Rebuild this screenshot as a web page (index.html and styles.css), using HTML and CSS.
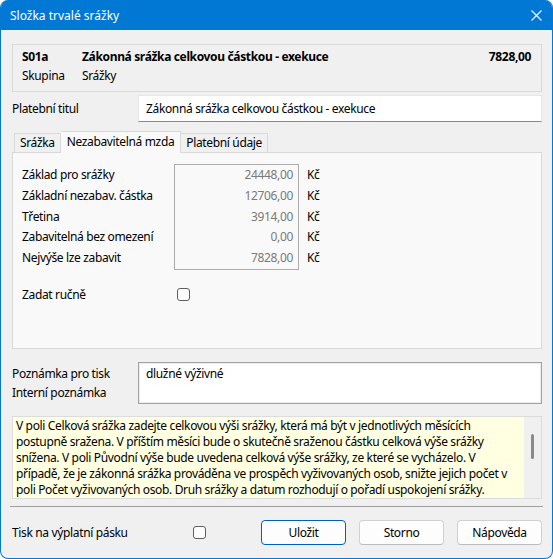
FILE: index.html
```html
<!DOCTYPE html>
<html lang="cs">
<head>
<meta charset="utf-8">
<title>Složka trvalé srážky</title>
<link rel="stylesheet" href="styles.css">
</head>
<body>
<div class="window">
  <div class="titlebar">
    <span class="title">Složka trvalé srážky</span>
    <svg class="close" width="11" height="11" viewBox="0 0 11 11"><path d="M0.5 0.5 L10.5 10.5 M10.5 0.5 L0.5 10.5" stroke="#fff" stroke-width="1.1" fill="none"/></svg>
  </div>
  <div class="content">
    <div class="header">
      <span class="b">S01a</span>
      <span class="b">Zákonná srážka celkovou částkou - exekuce</span>
      <span class="b amount">7828,00</span>
      <span>Skupina</span>
      <span>Srážky</span>
      <span></span>
    </div>

    <div class="field-row">
      <span class="label">Platební titul</span>
      <div class="input">Zákonná srážka celkovou částkou - exekuce</div>
    </div>

    <div class="tabs">
      <div class="tab">Srážka</div>
      <div class="tab active">Nezabavitelná mzda</div>
      <div class="tab">Platební údaje</div>
    </div>
    <div class="panel">
      <div class="calc">
        <div class="calc-labels">
          <div class="row">Základ pro srážky</div>
          <div class="row">Základní nezabav. částka</div>
          <div class="row">Třetina</div>
          <div class="row">Zabavitelná bez omezení</div>
          <div class="row">Nejvýše lze zabavit</div>
        </div>
        <div class="calc-values">
          <div class="row">24448,00</div>
          <div class="row">12706,00</div>
          <div class="row">3914,00</div>
          <div class="row">0,00</div>
          <div class="row">7828,00</div>
        </div>
        <div class="calc-units">
          <div class="row">Kč</div>
          <div class="row">Kč</div>
          <div class="row">Kč</div>
          <div class="row">Kč</div>
          <div class="row">Kč</div>
        </div>
      </div>
      <div class="manual">
        <span class="manual-label">Zadat ručně</span>
        <span class="checkbox"></span>
      </div>
    </div>

    <div class="notes">
      <div class="notes-labels">
        <div>Poznámka pro tisk</div>
        <div>Interní poznámka</div>
      </div>
      <div class="textarea">dlužné výživné</div>
    </div>

    <div class="help">
      <div class="help-text">V poli Celková srážka zadejte celkovou výši srážky, která má být v jednotlivých měsících postupně sražena. V příštím měsíci bude o skutečně sraženou částku celková výše srážky snížena. V poli Původní výše bude uvedena celková výše srážky, ze které se vycházelo. V případě, že je zákonná srážka prováděna ve prospěch vyživovaných osob, snižte jejich počet v poli Počet vyživovaných osob. Druh srážky a datum rozhodují o pořadí uspokojení srážky.</div>
      <div class="scrollbar"><div class="thumb"></div></div>
    </div>

    <div class="separator"></div>

    <div class="footer">
      <span class="footer-label">Tisk na výplatní pásku</span>
      <span class="checkbox"></span>
      <div class="buttons">
        <button class="btn default">Uložit</button>
        <button class="btn">Storno</button>
        <button class="btn">Nápověda</button>
      </div>
    </div>
  </div>
</div>
</body>
</html>
```

FILE: styles.css
```css
* { box-sizing: border-box; }
html, body { margin: 0; padding: 0; background: #ffffff; }
body {
  font-family: "Noto Sans", "Open Sans", sans-serif;
  font-size: 12px;
  letter-spacing: -0.35px;
  color: #000;
}
.window {
  width: 553px;
  height: 559px;
  border: 1px solid #0078d4;
  border-top: none;
  border-radius: 8px;
  background: #f0f0f0;
  overflow: hidden;
  display: flex;
  flex-direction: column;
}
.titlebar {
  height: 30px;
  flex: none;
  background: #0078d4;
  color: #fff;
  display: flex;
  align-items: center;
  padding: 0 10px 0 9px;
}
.title { font-size: 12px; letter-spacing: 0; }
.close { margin-left: auto; }
.content {
  padding: 0 10px 0 11px;
  display: flex;
  flex-direction: column;
}
.b { font-weight: bold; }
.header {
  margin-top: 14px;
  height: 48px;
  border: 1px solid #dadada;
  padding: 2px 10px 0 9px;
  display: grid;
  grid-template-columns: 60px 1fr auto;
  grid-auto-rows: 19px;
  line-height: 19px;
}
.amount { text-align: right; }
.field-row {
  margin-top: 3px;
  display: flex;
  align-items: center;
}
.label { width: 126px; flex: none; }
.input {
  flex: 1;
  height: 27px;
  background: #fff;
  border: 1px solid #e6e6e6;
  border-bottom: 1px solid #8a8a8a;
  padding: 0 7px;
  line-height: 25px;
}
.tabs {
  margin-top: 9px;
  height: 21px;
  display: flex;
  align-items: flex-end;
  padding-left: 2px;
  position: relative;
  z-index: 1;
}
.tab {
  height: 19px;
  line-height: 18px;
  padding: 0 5px;
  border: 1px solid #d9d9d9;
  border-bottom: none;
  border-left: none;
  background: #f0f0f0;
}
.tab:first-child { border-left: 1px solid #d9d9d9; }
.tab.active {
  height: 22px;
  margin-bottom: -1px;
  background: #f9f9f9;
  line-height: 20px;
  padding: 0 6px;
}
.panel {
  height: 197px;
  border: 1px solid #d9d9d9;
  background: #f9f9f9;
  padding: 11px 0 0 9px;
}
.calc { display: flex; }
.row { height: 20.8px; line-height: 20.8px; white-space: nowrap; }
.calc-labels { width: 152px; padding-top: 1px; }
.calc-values {
  width: 125px;
  border: 1px solid #adadad;
  padding: 0 5px;
  text-align: right;
  color: #7a7a7a;
  height: 106px;
}
.calc-units { padding-left: 8px; padding-top: 1px; }
.manual {
  margin-top: 16px;
  display: flex;
  align-items: center;
}
.manual-label { width: 155px; }
.checkbox {
  width: 13px;
  height: 13px;
  border: 1px solid #5e5e5e;
  border-radius: 3px;
  background: #fdfdfd;
  display: inline-block;
}
.notes {
  margin-top: 13px;
  display: flex;
}
.notes-labels { width: 126px; padding-top: 2px; line-height: 19px; }
.textarea {
  flex: 1;
  height: 42px;
  background: #fff;
  border: 1px solid #a3a3a3;
  box-shadow: inset 0 0 0 1px #ececec;
  padding: 2px 7px;
  line-height: 17px;
}
.help {
  margin-top: 12px;
  height: 83px;
  border: 1px solid #dcdcdc;
  background: #ffffe1;
  display: flex;
}
.help-text {
  flex: 1;
  padding: 1px 10px 0 3px;
  line-height: 16px;
}
.scrollbar {
  width: 17px;
  flex: none;
  background: #f0f0f0;
  padding-top: 17px;
  display: flex;
  justify-content: center;
}
.thumb {
  width: 3px;
  height: 25px;
  background: #8a8a8a;
  border-radius: 2px;
}
.separator {
  margin-top: 7px;
  height: 1px;
  background: #a0a0a0;
  margin-right: -1px;
  margin-left: -2px;
}
.footer {
  margin-top: 13px;
  display: flex;
  align-items: center;
}
.footer-label { width: 181px; }
.buttons {
  margin-left: auto;
  display: flex;
  gap: 13px;
}
.btn {
  width: 85px;
  height: 25px;
  font-family: inherit;
  font-size: 12px;
  letter-spacing: -0.35px;
  color: #000;
  background: #fdfdfd;
  border: 1px solid #d0d0d0;
  border-bottom-color: #bcbcbc;
  border-radius: 4px;
  padding: 0;
}
.btn.default {
  border: 1px solid #005fb8;
  box-shadow: inset 0 0 0 1px #fdfdfd;
}
```
